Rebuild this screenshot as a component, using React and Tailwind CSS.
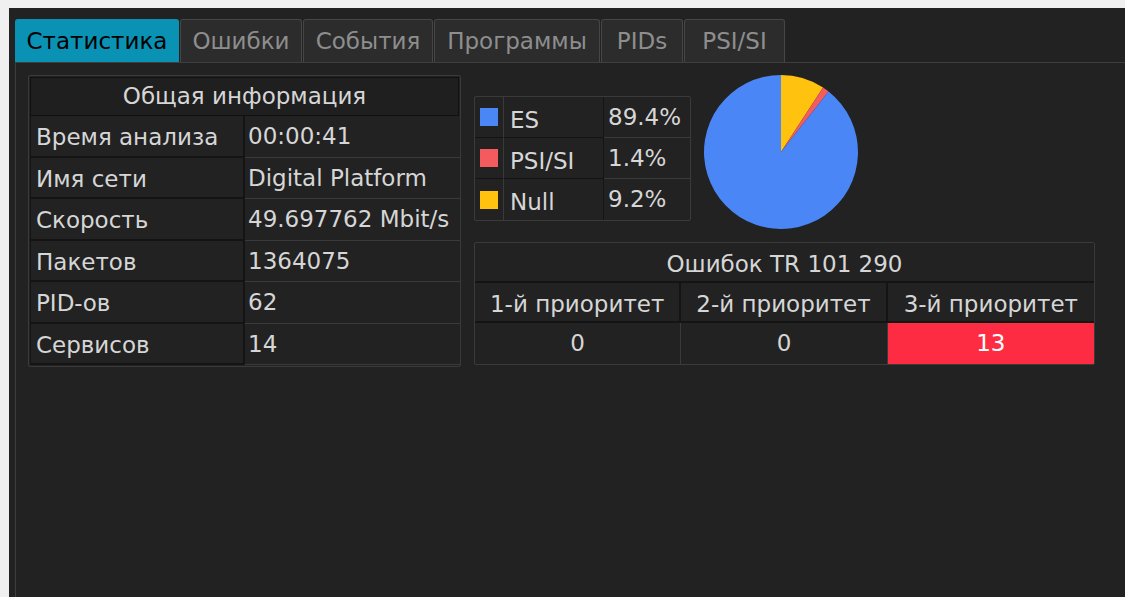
import React from 'react';

const TABS = [
  { label: 'Статистика', w: 'w-[164px]' },
  { label: 'Ошибки', w: 'w-[122px]' },
  { label: 'События', w: 'w-[130px]' },
  { label: 'Программы', w: 'w-[166px]' },
  { label: 'PIDs', w: 'w-[82px]' },
  { label: 'PSI/SI', w: 'w-[101px]' },
];

const INFO = [
  ['Время анализа', '00:00:41'],
  ['Имя сети', 'Digital Platform'],
  ['Скорость', '49.697762 Mbit/s'],
  ['Пакетов', '1364075'],
  ['PID-ов', '62'],
  ['Сервисов', '14'],
];

const SHARES = [
  { name: 'ES', value: 89.4, color: '#4a86f5' },
  { name: 'PSI/SI', value: 1.4, color: '#f35b5f' },
  { name: 'Null', value: 9.2, color: '#ffc20e' },
];

// pie slices go clockwise from 12 o'clock: Null, PSI/SI, then ES
function Pie({ size = 156 }) {
  const r = size / 2 - 1;
  const c = size / 2;
  const order = [SHARES[2], SHARES[1], SHARES[0]];
  let start = 0;
  const point = (frac) => {
    const a = frac * Math.PI * 2 - Math.PI / 2;
    return [c + r * Math.cos(a), c + r * Math.sin(a)];
  };
  return (
    <svg width={size} height={size} viewBox={`0 0 ${size} ${size}`}>
      {order.map((s) => {
        const frac = s.value / 100;
        const [x1, y1] = point(start);
        const [x2, y2] = point(start + frac);
        const large = frac > 0.5 ? 1 : 0;
        start += frac;
        return (
          <path
            key={s.name}
            d={`M${c} ${c} L${x1} ${y1} A${r} ${r} 0 ${large} 1 ${x2} ${y2} Z`}
            fill={s.color}
          />
        );
      })}
    </svg>
  );
}

export default function App() {
  return (
    <div className="min-h-screen w-full bg-[#f0f0f0] pl-[9px] pt-[8px] font-['DejaVu_Sans',sans-serif] text-[23px] text-[#d6d6d6]">
      <div className="h-[589px] bg-[#222222] pl-[6px] pt-[11px] flex flex-col">
        {/* Tabs */}
        <div className="flex h-[43px] gap-px">
          {TABS.map((t, i) => (
            <div
              key={t.label}
              className={`${t.w} flex items-center justify-center whitespace-nowrap rounded-t-[3px] border border-b-0 ${
                i === 0
                  ? 'bg-[#0a92b4] border-[#0a92b4] text-black'
                  : 'bg-[#2c2c2c] border-[#464646] text-[#8e8e8e]'
              }`}
            >
              {t.label}
            </div>
          ))}
        </div>

        {/* Pane */}
        <div className="flex-1 border-t border-l border-[#3e3e3e] pl-[12px] pt-[12px] flex gap-[13px] items-start">
          {/* General info */}
          <div className="w-[433px] border border-[#3a3a3a] rounded-[2px] p-px">
            <div className="h-[39px] flex items-center justify-center bg-[#1f1f1f] border border-[#111]">
              Общая информация
            </div>
            <div className="grid grid-cols-[215px_215px]">
              {INFO.map(([k, v]) => (
                <React.Fragment key={k}>
                  <div className="h-[41.5px] pl-[5px] flex items-end pb-[1px] border-b-2 border-r-2 border-l border-[#141414] whitespace-nowrap">
                    {k}
                  </div>
                  <div className="h-[41.5px] pl-[3px] flex items-start pt-[3px] border-b border-[#3a3a3a] whitespace-nowrap">
                    {v}
                  </div>
                </React.Fragment>
              ))}
            </div>
          </div>

          <div className="flex flex-col">
            <div className="flex items-start gap-[12px]">
              {/* Legend */}
              <div className="mt-[21px] w-[217px] border border-[#3a3a3a] rounded-[2px] grid grid-cols-[29px_100px_86px]">
                {SHARES.map((s, i) => (
                  <React.Fragment key={s.name}>
                    <div
                      className={`h-[41px] flex items-center justify-center border-r border-[#3a3a3a] ${
                        i < 2 ? 'border-b border-b-[#141414]' : ''
                      }`}
                    >
                      <span className="w-[18px] h-[18px]" style={{ background: s.color }} />
                    </div>
                    <div
                      className={`h-[41px] pl-[6px] flex items-center pt-[6px] border-r border-[#141414] whitespace-nowrap ${
                        i < 2 ? 'border-b' : ''
                      }`}
                    >
                      {s.name}
                    </div>
                    <div
                      className={`h-[41px] pl-[4px] flex items-start pt-[3px] whitespace-nowrap ${
                        i < 2 ? 'border-b border-[#3a3a3a]' : ''
                      }`}
                    >
                      {s.value}%
                    </div>
                  </React.Fragment>
                ))}
              </div>
              <div className="mt-[-1px]">
                <Pie />
              </div>
            </div>

            {/* TR 101 290 errors */}
            <div className="mt-[12px] w-[621px] border border-[#3a3a3a] rounded-[2px]">
              <div className="h-[40px] pt-[4px] flex items-center justify-center border-b-2 border-[#141414]">
                Ошибок TR 101 290
              </div>
              <div className="grid grid-cols-3">
                {['1-й приоритет', '2-й приоритет', '3-й приоритет'].map((h, i) => (
                  <div
                    key={h}
                    className={`h-[40px] pt-[4px] flex items-center justify-center border-b-2 border-[#141414] whitespace-nowrap ${
                      i < 2 ? 'border-r-2' : ''
                    }`}
                  >
                    {h}
                  </div>
                ))}
                {['0', '0', '13'].map((v, i) => (
                  <div
                    key={i}
                    className={`h-[41px] flex items-center justify-center ${
                      i < 2 ? 'border-r border-[#3a3a3a]' : 'bg-[#fe2c42] text-white'
                    }`}
                  >
                    {v}
                  </div>
                ))}
              </div>
            </div>
          </div>
        </div>
      </div>
    </div>
  );
}
